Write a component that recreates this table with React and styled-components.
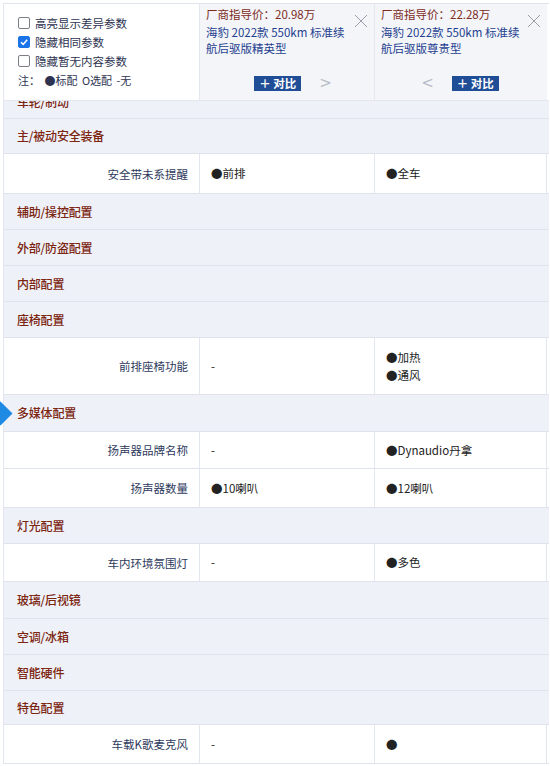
import React from 'react';
import styled, { createGlobalStyle } from 'styled-components';

const GlobalStyle = createGlobalStyle`
  html, body {
    margin: 0;
    padding: 0;
    background: #ffffff;
    font-family: "Noto Sans CJK SC", "Noto Sans", sans-serif;
  }
`;

const Page = styled.div`
  width: 550px;
  height: 766px;
  overflow: hidden;
  position: relative;
  background: #ffffff;
`;

const Table = styled.div`
  margin-left: 3px;
  width: 545px;
  border-left: 1px solid #e3e7ef;
  border-top: 1px solid #dfe3eb;
  margin-top: 3px;
`;

const HeaderRow = styled.div`
  display: grid;
  grid-template-columns: 195px 175px 173px;
  height: 96px;
  border-bottom: 1px solid #e3e7ef;
`;

const Options = styled.div`
  background: #ffffff;
  padding: 11px 0 0 14px;
  display: flex;
  flex-direction: column;
  gap: 3px;
`;

const OptionLine = styled.label`
  display: flex;
  align-items: center;
  gap: 5px;
  font-size: 11.5px;
  line-height: 16px;
  color: #2d3350;
`;

const Box = styled.span`
  width: 12px;
  height: 12px;
  box-sizing: border-box;
  border-radius: 2px;
  border: 1px solid ${p => (p.checked ? '#1a73e8' : '#7b7f88')};
  background: ${p => (p.checked ? '#1a73e8' : '#ffffff')};
  display: flex;
  align-items: center;
  justify-content: center;
`;

const Note = styled.div`
  font-size: 11px;
  line-height: 15px;
  color: #2d3350;
  margin-top: 1px;
  word-spacing: 2px;
`;

const CarHead = styled.div`
  position: relative;
  background: #f3f5f9;
  border-left: 1px solid #e3e7ef;
  padding: 2px 8px 0 6px;
  display: flex;
  flex-direction: column;
`;

const Price = styled.div`
  font-size: 11.5px;
  line-height: 16px;
  color: #7d2b1c;
`;

const CarName = styled.div`
  font-size: 11.5px;
  line-height: 16px;
  color: #1f3f8f;
  margin-top: 2px;
  width: 146px;
`;

const Close = styled.span`
  position: absolute;
  top: 5px;
  right: 6px;
  width: 14px;
  height: 14px;
`;

const Actions = styled.div`
  margin-top: auto;
  margin-bottom: 9px;
  display: flex;
  align-items: center;
  justify-content: center;
  gap: 18px;
  padding-left: ${p => (p.side === 'left' ? '0' : '14px')};
`;

const Arrow = styled.span`
  color: #b8bcc6;
  font-size: 15px;
  line-height: 15px;
  font-family: "DejaVu Sans", sans-serif;
`;

const CompareBtn = styled.span`
  background: #1f4d96;
  color: #ffffff;
  font-size: 11.5px;
  font-weight: 700;
  line-height: 15px;
  padding: 0 5px;
  display: flex;
  align-items: center;
  gap: 5px;
`;

const SectionRow = styled.div`
  position: relative;
  height: ${p => p.h || 35}px;
  background: #eef1f7;
  border-bottom: 1px solid #dfe3ec;
  display: flex;
  align-items: ${p => (p.clipped ? 'flex-end' : 'center')};
  padding-left: 13px;
  padding-bottom: ${p => (p.clipped ? '8px' : '0')};
  box-sizing: border-box;
  overflow: ${p => (p.clipped ? 'hidden' : 'visible')};
`;

const SectionTitle = styled.span`
  font-size: 12px;
  line-height: 16px;
  color: #7c2511;
  font-weight: 500;
  letter-spacing: -0.2px;
`;

const Marker = styled.span`
  position: absolute;
  left: -12px;
  top: 50%;
  width: 17px;
  height: 17px;
  margin-top: -8px;
  background: #1f8ae3;
  transform: rotate(45deg);
`;

const DataRow = styled.div`
  display: grid;
  grid-template-columns: 195px 175px 173px;
  height: ${p => p.h || 38}px;
  background: #ffffff;
  border-bottom: 1px solid #dfe3ec;
  box-sizing: border-box;
`;

const Label = styled.div`
  font-size: 11.5px;
  color: #2e3a5c;
  display: flex;
  align-items: center;
  justify-content: flex-end;
  padding-right: 11px;
`;

const Cell = styled.div`
  border-left: 1px solid #e3e7ef;
  border-right: ${p => (p.last ? '1px solid #e3e7ef' : 'none')};
  padding-left: 11px;
  display: flex;
  flex-direction: column;
  justify-content: center;
  gap: 3px;
  font-size: 11.5px;
  color: #222222;
`;

const Item = styled.span`
  line-height: 15px;
`;

const Check = () => (
  <svg width="10" height="10" viewBox="0 0 10 10">
    <path d="M2 5.2 L4.2 7.4 L8.2 2.8" stroke="#fff" strokeWidth="1.6" fill="none" />
  </svg>
);

const CloseIcon = () => (
  <svg width="14" height="14" viewBox="0 0 14 14">
    <path d="M1 1 L13 13 M13 1 L1 13" stroke="#9aa0ab" strokeWidth="1" fill="none" />
  </svg>
);

const rows = [
  { type: 's', title: '车轮/制动', h: 18, clipped: true },
  { type: 's', title: '主/被动安全装备', h: 35 },
  { type: 'd', label: '安全带未系提醒', a: ['●前排'], b: ['●全车'], h: 40 },
  { type: 's', title: '辅助/操控配置', h: 36 },
  { type: 's', title: '外部/防盗配置', h: 36 },
  { type: 's', title: '内部配置', h: 36 },
  { type: 's', title: '座椅配置', h: 36 },
  { type: 'd', label: '前排座椅功能', a: ['-'], b: ['●加热', '●通风'], h: 57 },
  { type: 's', title: '多媒体配置', h: 37, marker: true },
  { type: 'd', label: '扬声器品牌名称', a: ['-'], b: ['●Dynaudio丹拿'], h: 37 },
  { type: 'd', label: '扬声器数量', a: ['●10喇叭'], b: ['●12喇叭'], h: 39 },
  { type: 's', title: '灯光配置', h: 36 },
  { type: 'd', label: '车内环境氛围灯', a: ['-'], b: ['●多色'], h: 38 },
  { type: 's', title: '玻璃/后视镜', h: 37 },
  { type: 's', title: '空调/冰箱', h: 36 },
  { type: 's', title: '智能硬件', h: 36 },
  { type: 's', title: '特色配置', h: 34 },
  { type: 'd', label: '车载K歌麦克风', a: ['-'], b: ['●'], h: 39 },
];

const cars = [
  { price: '厂商指导价：20.98万', name: '海豹 2022款 550km 标准续航后驱版精英型', left: false, right: true, side: 'right' },
  { price: '厂商指导价：22.28万', name: '海豹 2022款 550km 标准续航后驱版尊贵型', left: true, right: false, side: 'left' },
];

export default function App() {
  return (
    <Page>
      <GlobalStyle />
      <Table>
        <HeaderRow>
          <Options>
            <OptionLine><Box /> 高亮显示差异参数</OptionLine>
            <OptionLine><Box checked><Check /></Box> 隐藏相同参数</OptionLine>
            <OptionLine><Box /> 隐藏暂无内容参数</OptionLine>
            <Note>注： ●标配 O选配 -无</Note>
          </Options>
          {cars.map((c, i) => (
            <CarHead key={i}>
              <Close><CloseIcon /></Close>
              <Price>{c.price}</Price>
              <CarName>{c.name}</CarName>
              <Actions side={c.side}>
                {c.left && <Arrow>&lt;</Arrow>}
                <CompareBtn>＋ 对比</CompareBtn>
                {c.right && <Arrow>&gt;</Arrow>}
              </Actions>
            </CarHead>
          ))}
        </HeaderRow>
        {rows.map((r, i) =>
          r.type === 's' ? (
            <SectionRow key={i} h={r.h} clipped={r.clipped}>
              {r.marker && <Marker />}
              <SectionTitle>{r.title}</SectionTitle>
            </SectionRow>
          ) : (
            <DataRow key={i} h={r.h}>
              <Label>{r.label}</Label>
              <Cell>{r.a.map((t, j) => <Item key={j}>{t}</Item>)}</Cell>
              <Cell last>{r.b.map((t, j) => <Item key={j}>{t}</Item>)}</Cell>
            </DataRow>
          )
        )}
      </Table>
    </Page>
  );
}
